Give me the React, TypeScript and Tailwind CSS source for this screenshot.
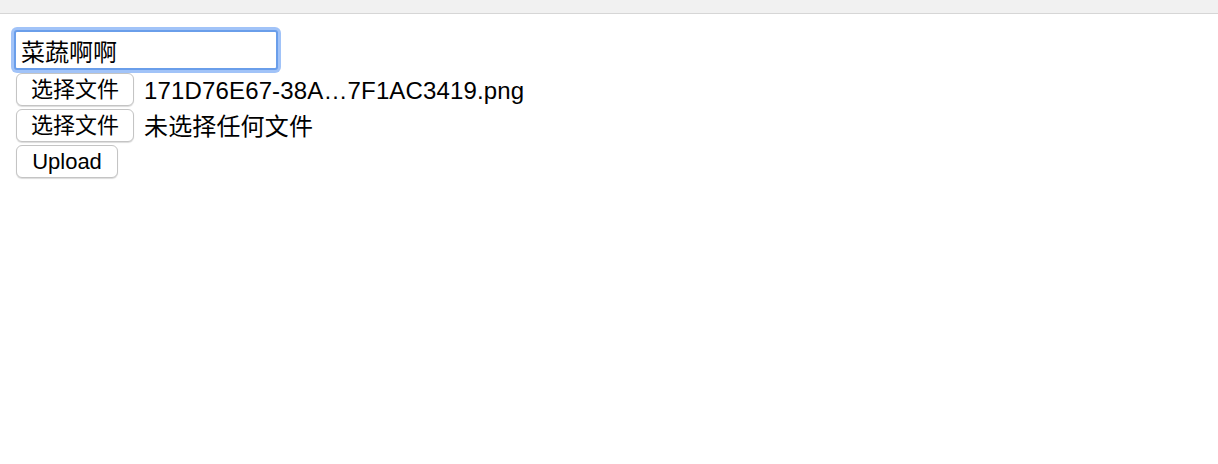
import React from "react";

const font = { fontFamily: '"Liberation Sans", "Noto Sans CJK SC", sans-serif' };

const btn =
  "h-[33px] bg-white border border-[#c4c4c4] rounded-[6px] shadow-[0_1px_1px_rgba(0,0,0,0.14)] text-[22px] leading-none text-black flex items-center justify-center";

function FileRow({ label }: { label: string }) {
  return (
    <div className="flex items-center h-[33px] mb-[3px]">
      <button className={`${btn} w-[118px]`}>选择文件</button>
      <span className="ml-[10px] mt-[2px] text-[24px] tracking-[0.15px] leading-none text-black whitespace-nowrap">{label}</span>
    </div>
  );
}

export default function App() {
  return (
    <div className="w-[1218px] h-[464px] bg-white overflow-hidden" style={font}>
      <div className="h-[14px] bg-[#f1f1f1] border-b border-[#d6d6d6]" />
      <div className="pl-[16px] pt-[16px] flex flex-col items-start">
        <input
          defaultValue="菜蔬啊啊"
          className="-ml-[2px] h-[40px] w-[264px] px-[5px] text-[24px] text-black bg-white border-2 border-[#6a9eea] rounded-[3px] shadow-[0_0_0_3px_rgba(130,175,245,0.75)] outline-none"
          style={font}
        />
        <div className="mt-[3px] flex flex-col">
          <FileRow label="171D76E67-38A…7F1AC3419.png" />
          <FileRow label="未选择任何文件" />
          <div className="h-[33px] flex items-center">
            <button className={`${btn} w-[102px]`}>Upload</button>
          </div>
        </div>
      </div>
    </div>
  );
}
